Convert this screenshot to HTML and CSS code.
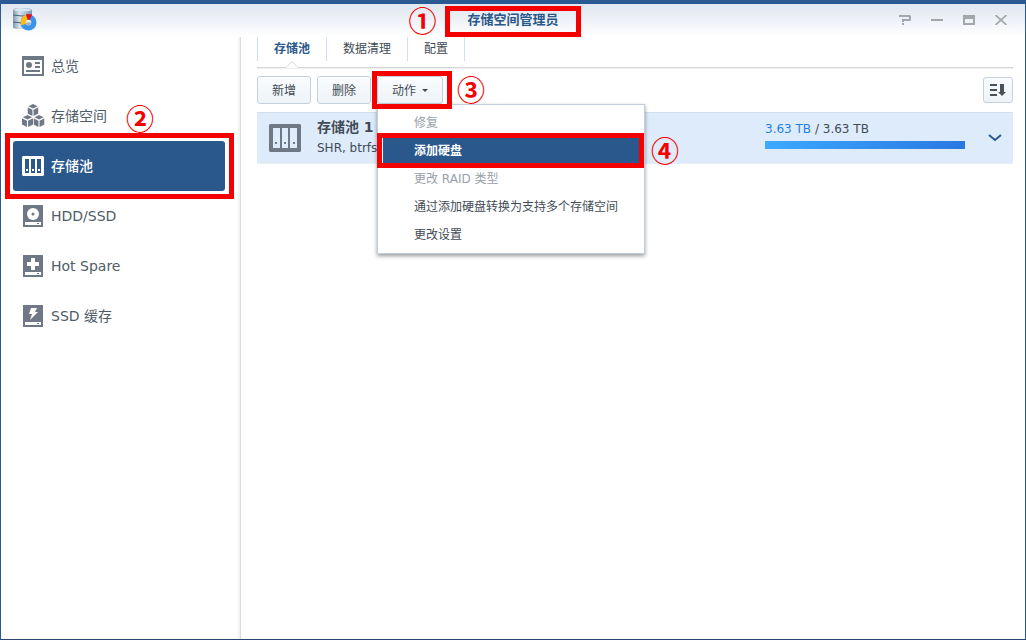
FILE: index.html
```html
<!DOCTYPE html>
<html lang="zh-CN">
<head>
<meta charset="utf-8">
<title>存储空间管理员</title>
<link rel="stylesheet" href="styles.css">
</head>
<body>
<svg class="defs" aria-hidden="true">
  <defs>
    <linearGradient id="steel" x1="0" y1="0" x2="1" y2="0"><stop offset="0" stop-color="#7d97ad"/><stop offset=".35" stop-color="#d5e4ee"/><stop offset="1" stop-color="#7c98af"/></linearGradient>
    <symbol id="pool" viewBox="0 0 22 20"><path fill="currentColor" fill-rule="evenodd" d="M1 0h20l1 1v18l-1 1H1l-1-1V1zM3 3v14h4V3zM9 3v14h4V3zM15 3v14h4V3z"/><path fill="currentColor" d="M4 13h2v2H4zM10 13h2v2h-2zM16 13h2v2h-2z"/></symbol>
    <symbol id="cube" viewBox="0 0 12 13"><path fill="currentColor" d="M6 0l5 2.3L6 4.8 1 2.3zM0 3.6l5.4 2.6V13L0 10.2zM12 3.6L6.6 6.2V13l5.4-2.8z"/></symbol>
  </defs>
</svg>
<div class="window">
  <header class="titlebar">
    <svg class="app-icon" viewBox="0 0 24 23" aria-hidden="true">
      <path fill="url(#steel)" d="M0 2Q0 0 9 0t10 2v17q0 2-10 2T0 19z"/>
      <ellipse cx="9.500" cy="2" rx="9" ry="1.500" fill="#d6e7f2"/>
      <path fill="none" stroke="#4c6276" d="M0 7q9 2 19 0M0 14q9 2 19 0"/>
      <circle cx="15.500" cy="14.500" r="5.500" fill="none" stroke="#3895eb" stroke-width="5"/>
      <path fill="#ffbe0b" d="M15.500 14.500l-7 3A8 8 0 0 1 13 6.500z"/>
      <path fill="#e4101b" d="M15.500 14.500L13 6.300q3-.8 6 .4z"/>
      <circle cx="15.500" cy="14.500" r="2.800" fill="#e7eef5"/>
      <path fill="#9aafc0" d="M13 14.500h5a2.500 2.500 0 0 1-5 0z"/>
    </svg>
    <h1 class="title">存储空间管理员<span class="mark mark-title"></span><span class="step step-title">①</span></h1>
    <div class="controls">
      <button class="control" aria-label="帮助"><svg width="12" height="10" viewBox="0 0 12 10"><path fill="#a1a7ad" d="M0 0h11l1 1v4l-1 1H5v1H3V4h7V2H0zM3 8h2v2H3z"/></svg></button>
      <button class="control" aria-label="最小化"><svg width="12" height="10" viewBox="0 0 12 10"><path fill="#a1a7ad" d="M0 4h12v2H0z"/></svg></button>
      <button class="control" aria-label="最大化"><svg width="12" height="10" viewBox="0 0 12 10"><path fill="#a1a7ad" fill-rule="evenodd" d="M0 0h12v10H0zM2 4v4h8V4z"/></svg></button>
      <button class="control" aria-label="关闭"><svg width="12" height="10" viewBox="0 0 12 10"><path fill="none" stroke="#a1a7ad" stroke-width="1.600" d="M.5 0l11 10M11.500 0L.5 10"/></svg></button>
    </div>
  </header>
  <div class="body">
    <nav class="sidebar">
      <a class="nav-item" href="#"><svg class="nav-icon" viewBox="0 0 24 24"><path fill="#6f7986" fill-rule="evenodd" d="M1 2h22v20H1zM3 6v14h18V6z"/><circle cx="8" cy="11" r="3" fill="#6f7986"/><path fill="#6f7986" d="M14 8h5v2h-5zM14 12h5v2h-5zM5 16h14v2H5z"/></svg>总览</a>
      <a class="nav-item" href="#"><svg class="nav-icon" viewBox="0 0 24 24"><use href="#cube" x="6.500" y="0" width="11" height="12"/><use href="#cube" x="1" y="11" width="11" height="12"/><use href="#cube" x="12.500" y="11" width="11" height="12"/></svg>存储空间<span class="step step-nav">②</span></a>
      <a class="nav-item active" href="#" aria-current="page"><svg class="nav-icon" viewBox="0 0 24 24"><use href="#pool" x="1" y="2" width="22" height="20"/></svg>存储池<span class="mark mark-nav"></span></a>
      <a class="nav-item" href="#"><svg class="nav-icon" viewBox="0 0 24 24"><path fill="#6f7986" d="M2 1h20v22H2z"/><circle cx="12" cy="10" r="6" fill="#fff"/><circle cx="12" cy="10" r="1.500" fill="#6f7986"/><path fill="#fff" d="M4 18h16v3H4z"/><path fill="#6f7986" d="M16 19h2v1h-2z"/></svg>HDD/SSD</a>
      <a class="nav-item" href="#"><svg class="nav-icon" viewBox="0 0 24 24"><path fill="#6f7986" d="M2 1h20v22H2z"/><path fill="#fff" d="M10 4h4v4h4v4h-4v4h-4v-4H6V8h4zM4 18h16v3H4z"/><path fill="#6f7986" d="M16 19h2v1h-2z"/></svg>Hot Spare</a>
      <a class="nav-item" href="#"><svg class="nav-icon" viewBox="0 0 24 24"><path fill="#6f7986" d="M2 1h20v22H2z"/><path fill="#fff" d="M10 4h6l-2 4h3L9 16l2-6H8zM4 18h16v3H4z"/><path fill="#6f7986" d="M16 19h2v1h-2z"/></svg>SSD 缓存</a>
    </nav>
    <main class="main">
      <div class="tabs" role="tablist">
        <button class="tab selected" role="tab" aria-selected="true">存储池<svg class="notch" width="14" height="8" viewBox="0 0 14 8"><path fill="#fff" stroke="#cfd3d6" d="M0 7.500h1l6-6 6 6h1"/><path stroke="#fff" stroke-width="1.500" d="M1.500 7.500h11"/></svg></button>
        <button class="tab" role="tab">数据清理</button>
        <button class="tab" role="tab">配置</button>
      </div>
      <div class="toolbar">
        <button class="btn">新增</button>
        <button class="btn">删除</button>
        <div class="dropdown">
          <button class="btn btn-menu" aria-haspopup="true" aria-expanded="true">动作<svg width="6" height="3" viewBox="0 0 6 3"><path fill="#414b55" d="M0 0h6L3 3z"/></svg></button>
          <div class="menu" role="menu">
            <button class="menu-item" role="menuitem" disabled>修复</button>
            <button class="menu-item current" role="menuitem">添加硬盘<span class="mark mark-item"></span><span class="step step-item">④</span></button>
            <button class="menu-item" role="menuitem" disabled>更改 RAID 类型</button>
            <button class="menu-item" role="menuitem">通过添加硬盘转换为支持多个存储空间</button>
            <button class="menu-item" role="menuitem">更改设置</button>
          </div>
          <span class="mark mark-action"></span><span class="step step-action">③</span>
        </div>
        <button class="btn sort" aria-label="排序"><svg width="16" height="12" viewBox="0 0 16 12"><path fill="#47525d" d="M0 0h7v2H0zM0 5h7v2H0zM0 10h7v2H0zM10 0h4v8h2l-4 4-4-4h2z"/></svg></button>
      </div>
      <section class="pool">
        <svg class="pool-icon" viewBox="0 0 32 28"><path fill="#6f7986" fill-rule="evenodd" d="M1 0h30l1 1v26l-1 1H1l-1-1V1zM4 4v20h7V4zM13 4v20h6V4zM21 4v20h7V4z"/><path fill="#6f7986" d="M6 18h2v2H6zM15 18h2v2h-2zM24 18h2v2h-2z"/></svg>
        <div class="pool-info">
          <h2 class="pool-name">存储池 1</h2>
          <p class="pool-desc">SHR, btrfs</p>
        </div>
        <div class="usage">
          <div><span class="used">3.63 TB</span> / 3.63 TB</div>
          <div class="bar"><div class="bar-fill" style="width:100%"></div></div>
        </div>
        <button class="expand" aria-label="展开"><svg width="14" height="8" viewBox="0 0 14 8"><path fill="none" stroke="#2b5a8f" stroke-width="2" d="M1 1l6 5 6-5"/></svg></button>
      </section>
    </main>
  </div>
</div>
</body>
</html>
```

FILE: styles.css
```css
* { box-sizing: border-box; }
body {
  margin: 0;
  font: 12px/16px "DejaVu Sans", "Noto Sans CJK SC", sans-serif;
  color: #414b55;
}
button, h1, h2, p { margin: 0; padding: 0; border: 0; background: none; font: inherit; color: inherit; }
svg { display: block; flex: none; }
.defs { position: absolute; width: 0; height: 0; }

.window {
  display: flex;
  flex-direction: column;
  min-height: 100vh;
  border: 1px solid #2a5a91;
  border-top: 4px solid #2a5a91;
  border-bottom-color: #28466f;
  background: #fff;
}
.titlebar {
  display: grid;
  grid-template-columns: 1fr auto 1fr;
  align-items: center;
  height: 33px;
  padding: 0 12px 2px;
  background: linear-gradient(#dfe6ef, #fff);
}
.app-icon { width: 24px; height: 23px; }
.title { position: relative; font-size: 13px; font-weight: 700; color: #2b588c; }
.controls { display: flex; justify-content: flex-end; gap: 20px; padding-right: 6px; }

.body { display: flex; flex: 1; }
.sidebar {
  width: 240px;
  flex: none;
  padding: 4px 15px 0 12px;
  border-right: 1px solid #dcdcdc;
  box-shadow: inset -2px 0 1px #f3f3f3;
}
.nav-item {
  position: relative;
  display: flex;
  align-items: center;
  gap: 6px;
  height: 50px;
  padding-left: 8px;
  border-radius: 3px;
  font-size: 14px;
  color: #505c68;
  text-decoration: none;
}
.nav-icon { width: 24px; height: 24px; color: #6f7986; }
.nav-item.active { background: #2a588c; color: #fff; font-weight: 500; }
.nav-item.active .nav-icon { color: #fff; }

.main { flex: 1; min-width: 0; padding: 0 12px 0 16px; }
.tabs {
  display: flex;
  padding-bottom: 6px;
  border-bottom: 1px solid #d3d7d9;
  box-shadow: 0 1px 1px #f0f0f0;
}
.tab { position: relative; height: 24px; padding: 0 16px; border-left: 1px solid #d3dfea; }
.tab:last-child { border-right: 1px solid #d3dfea; }
.tab.selected { font-weight: 700; color: #2b588c; }
.notch { position: absolute; top: 23px; left: 50%; margin-left: -7px; }

.toolbar { display: flex; align-items: center; gap: 6px; padding: 8px 0; }
.btn {
  display: flex;
  align-items: center;
  justify-content: center;
  width: 54px;
  height: 28px;
  padding-top: 1px;
  border: 1px solid #c4d1dd;
  border-radius: 3px;
  background: linear-gradient(#fafcfe, #edf3f8);
}
.btn-menu { width: 66px; gap: 6px; }
.sort { width: 30px; height: 26px; padding-top: 0; margin-left: auto; }
.dropdown { position: relative; z-index: 1; }
.menu {
  position: absolute;
  top: 28px;
  left: 0;
  width: 268px;
  padding: 3px 5px 5px;
  border: 1px solid #c2cedb;
  background: #fff;
  box-shadow: 0 2px 4px rgba(0, 0, 0, .4);
}
.menu-item {
  position: relative;
  display: block;
  width: 100%;
  height: 28px;
  padding: 2px 0 0 31px;
  text-align: left;
  white-space: nowrap;
}
.menu-item:disabled { color: #98a1aa; }
.menu-item.current { background: #2a588c; color: #fff; font-weight: 700; }

.pool {
  display: flex;
  align-items: center;
  height: 52px;
  padding: 0 11px 0 12px;
  border-top: 1px solid #d3e0ec;
  border-bottom: 1px solid #e6eef6;
  background: #deebfb;
}
.pool-icon { width: 32px; height: 28px; }
.pool-info { flex: 1; padding-left: 16px; line-height: 21px; }
.pool-name { font-size: 14px; font-weight: 700; }
.usage { width: 200px; margin-right: 23px; padding-bottom: 6px; }
.used { color: #1f80e0; }
.bar { margin-top: 4px; height: 8px; background: #fff; }
.bar-fill { height: 100%; background: linear-gradient(90deg, #3caaff, #2a78e2); }

/* Tutorial callouts */
.mark { position: absolute; z-index: 2; border: 5px solid #f50000; pointer-events: none; }
.mark-title { inset: -6px -22px -9px; }
.mark-nav { inset: -8px -9px -8px -8px; }
.mark-action { inset: -5px -9px -5px -5px; }
.mark-item { inset: -3px -5px -4px -6px; }
.step {
  position: absolute;
  z-index: 3;
  font: 700 28px/28px "Noto Sans CJK SC", sans-serif;
  color: #f50000;
}
.step-title { top: -6px; left: -59px; }
.step-nav { top: 13px; left: 113px; }
.step-action { top: -1px; left: 80px; }
.step-item { top: 0; left: 268px; }
```
